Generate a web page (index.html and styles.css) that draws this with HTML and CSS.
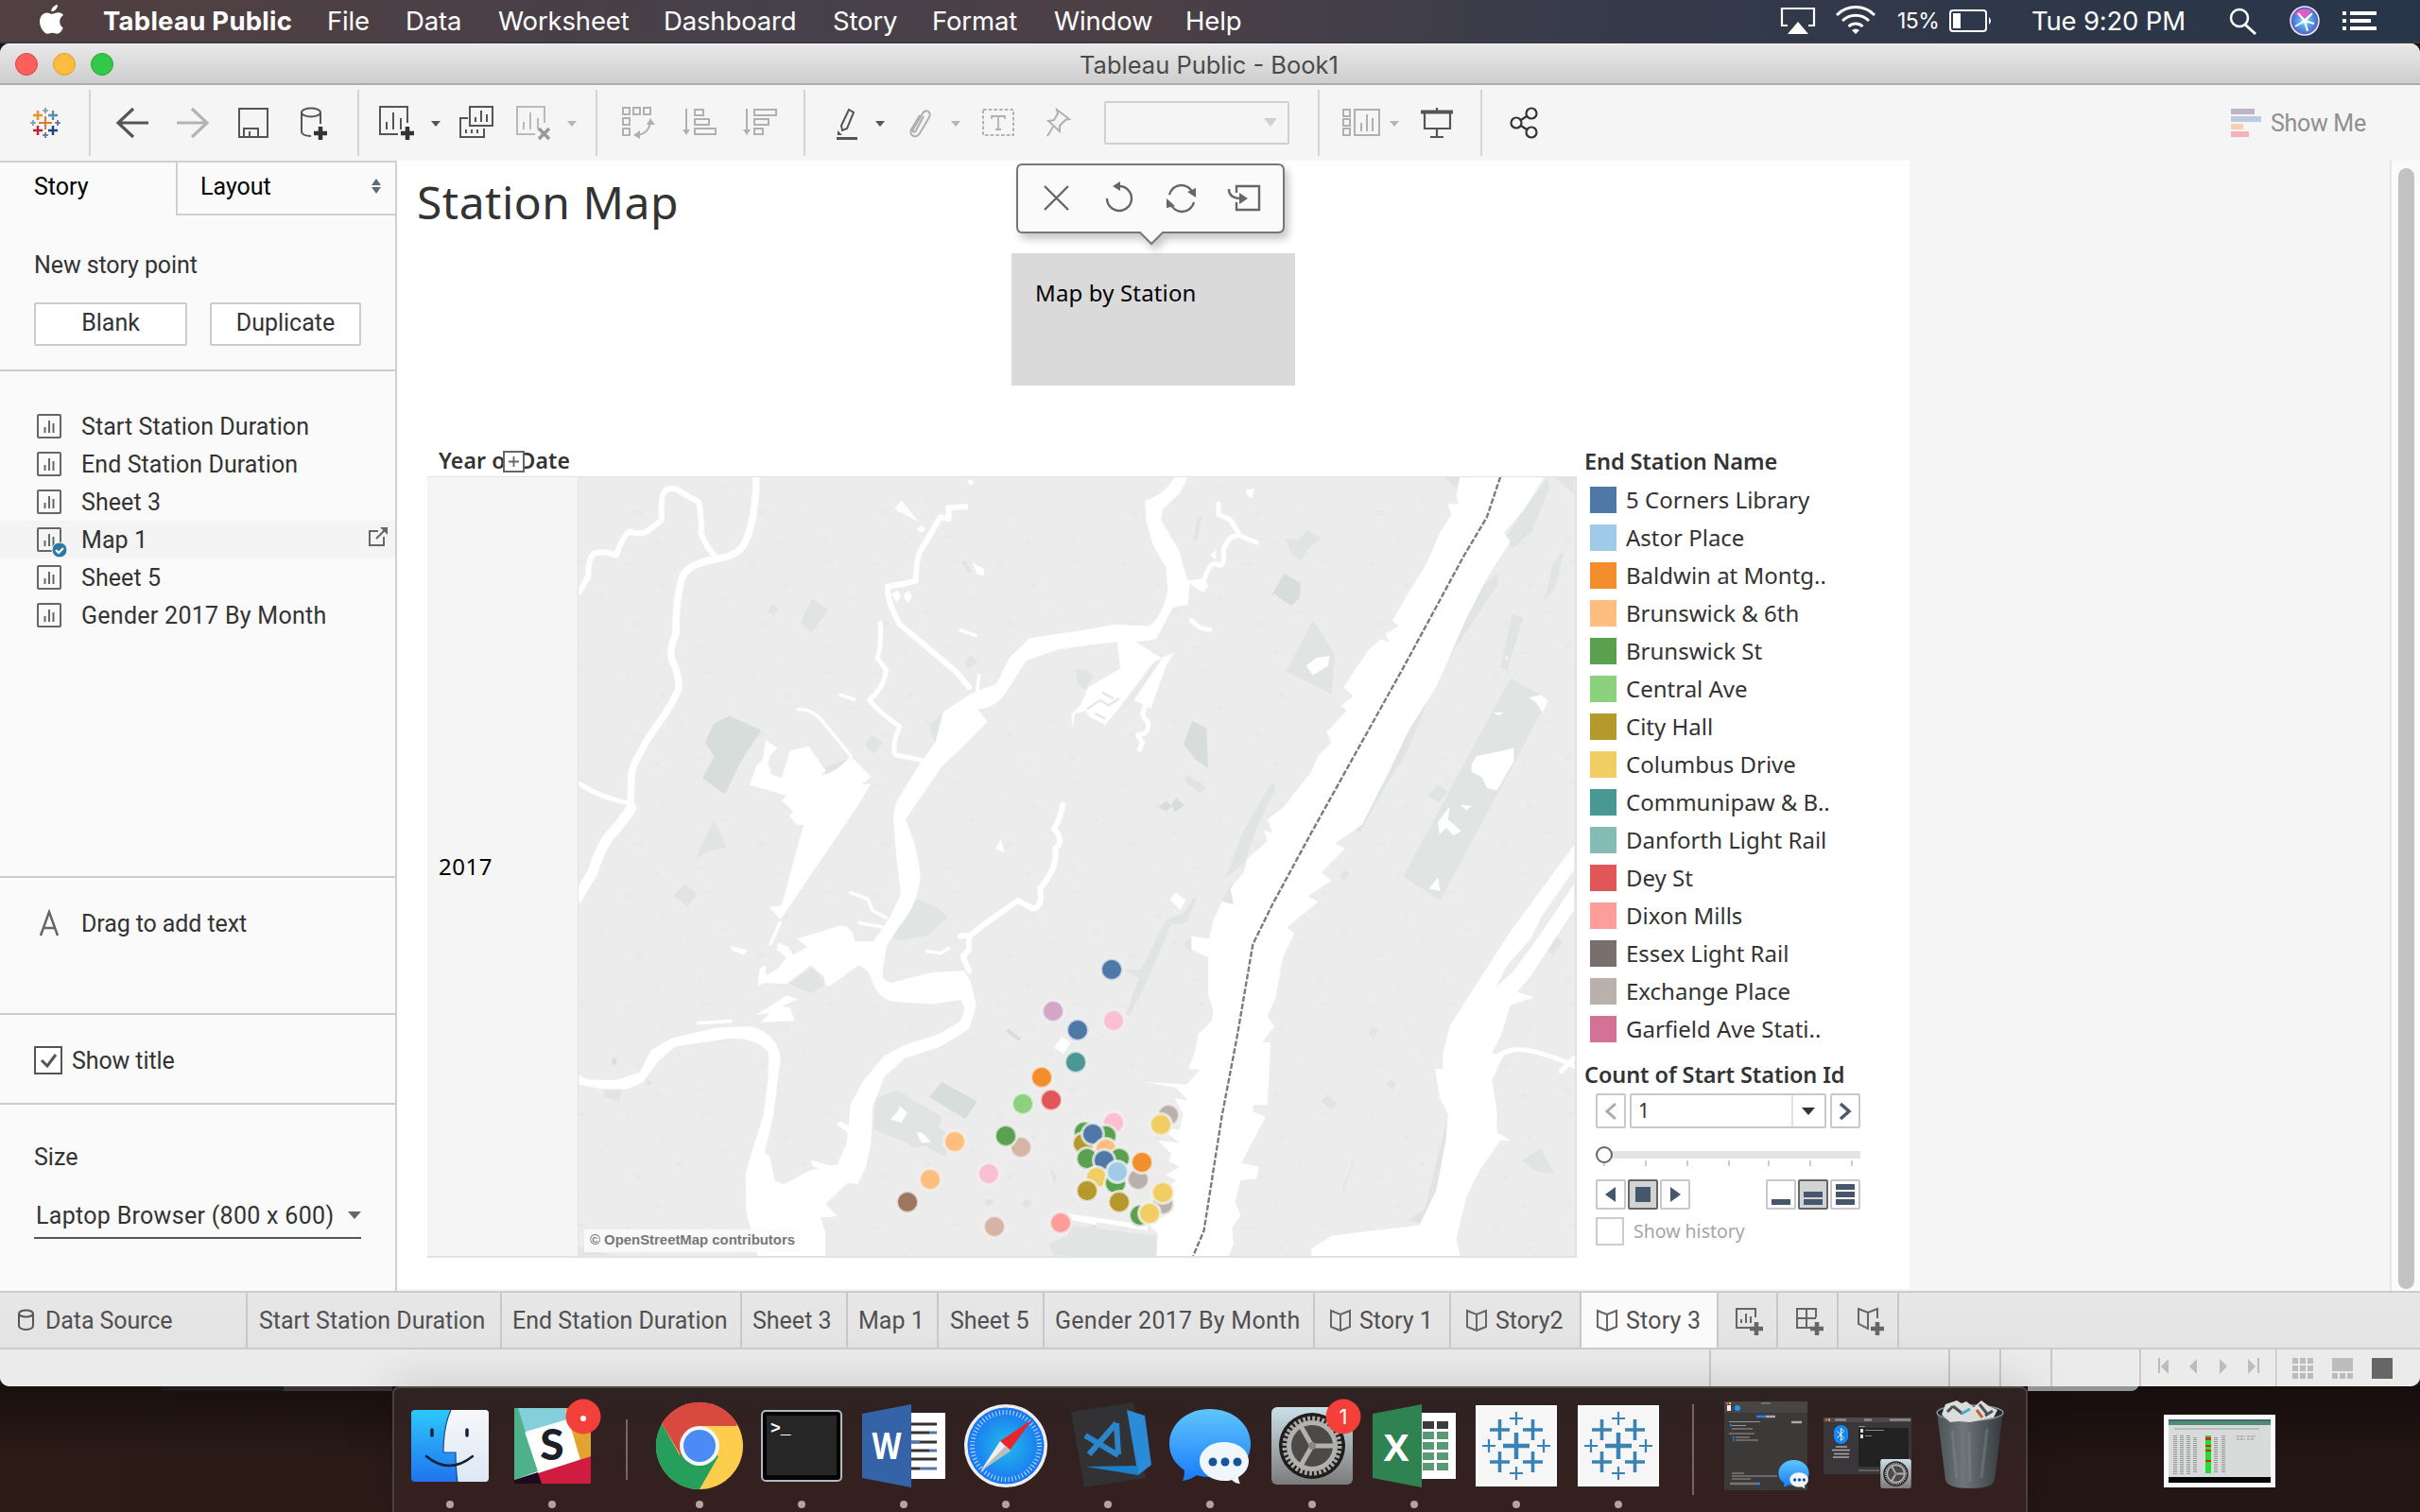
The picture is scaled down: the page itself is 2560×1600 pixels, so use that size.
FILE: index.html
```html
<!DOCTYPE html>
<html lang="en">
<head>
<meta charset="utf-8">
<title>Tableau Public - Book1</title>
<link rel="stylesheet" href="styles.css">
</head>
<body>
<svg class="defs" width="0" height="0">
  <defs>
    <symbol id="sheet" viewBox="0 0 26 26"><rect x="1" y="1" width="24" height="24" rx="1" fill="none" stroke="#666" stroke-width="2"/><path d="M8.500 14v6M13 7v13M17.500 10v10" stroke="#666" stroke-width="2"/></symbol>
    <symbol id="book" viewBox="0 0 24 24"><path d="M2 2l10 4 10-4v17l-10 4-10-4zM12 6v17" fill="none" stroke="#666" stroke-width="2"/></symbol>
    <symbol id="tabcross" viewBox="0 0 86 86"><rect width="86" height="86" fill="#f6f6f6"/><rect x="1" y="1" width="84" height="84" fill="none" stroke="#fff" stroke-width="2"/>
      <path d="M43 29v28M29 43h28" stroke="#3a82b4" stroke-width="4.500"/>
      <path d="M25.500 15v22M15 26h21M60.500 15v22M50 26h21M25.500 49v22M15 60h21M60.500 49v22M50 60h21" stroke="#3a82b4" stroke-width="3.600"/>
      <path d="M43 7v14M36 14h14M43 65v14M36 72h14M14 36v14M7 43h14M72 36v14M65 43h14" stroke="#3a82b4" stroke-width="2.200"/></symbol>
    <symbol id="bubble" viewBox="0 0 88 84"><path d="M44 2C20 2 1 18 1 39c0 12 6 21 16 28 0 5-1 9-2 11 7-1 12-4 15-6 4 1 9 2 14 2 24 0 43-14 43-35S68 2 44 2z" fill="url(#gmsg)"/><path d="M59 37c-15 0-26 9-26 20s11 21 26 21c3 0 6 0 8-1 3 3 6 4 9 4-1-2-2-4-2-7 7-4 11-10 11-17 0-11-11-20-26-20z" fill="#eff6fc"/><g fill="#15549b"><circle cx="47" cy="58" r="4.500"/><circle cx="60" cy="58" r="4.500"/><circle cx="73" cy="58" r="4.500"/></g></symbol>
    <symbol id="gear" viewBox="0 0 86 82"><rect width="86" height="82" rx="6" fill="url(#gpref)"/><circle cx="43" cy="41" r="35" fill="#1d1d1d"/><circle cx="43" cy="41" r="29" fill="none" stroke="#a9a7a4" stroke-width="5" stroke-dasharray="3 2.060"/><circle cx="43" cy="41" r="24.500" fill="#4b4a49" stroke="#b3b1ae" stroke-width="5"/><path d="M43 41h24M43 41L31 20M43 41L31 62" stroke="#b3b1ae" stroke-width="5"/><circle cx="43" cy="41" r="4" fill="#8a8886"/></symbol>
    <linearGradient id="gmsg" x2="0" y2="1"><stop stop-color="#5fc6fb"/><stop offset="1" stop-color="#1a7bfb"/></linearGradient>
    <linearGradient id="gpref" x2="0" y2="1"><stop stop-color="#cbdfe8"/><stop offset="1" stop-color="#7d7b7b"/></linearGradient>
    <linearGradient id="gfind" x2="0" y2="1"><stop stop-color="#2cc8fb"/><stop offset="1" stop-color="#2173ee"/></linearGradient>
    <linearGradient id="gface" x2="0" y2="1"><stop stop-color="#f7f7f9"/><stop offset="1" stop-color="#dbe8f4"/></linearGradient>
    <radialGradient id="gsaf"><stop stop-color="#20bdea"/><stop offset="1" stop-color="#1b74f2"/></radialGradient>
    <linearGradient id="gtrash"><stop stop-color="#4c5357"/><stop offset=".4" stop-color="#6d767b"/><stop offset="1" stop-color="#34393c"/></linearGradient>
    <radialGradient id="gsiri"><stop stop-color="#fff"/><stop offset=".35" stop-color="#4fb7ec"/><stop offset="1" stop-color="#5757c8"/></radialGradient>
    <pattern id="speck" width="131" height="117" patternUnits="userSpaceOnUse"><g fill="#e8e9e9"><ellipse cx="10" cy="12" rx="4" ry="2"/><ellipse cx="46" cy="34" rx="3" ry="3"/><ellipse cx="92" cy="9" rx="5" ry="2"/><ellipse cx="112" cy="48" rx="3" ry="2"/><ellipse cx="20" cy="75" rx="5" ry="3"/><ellipse cx="64" cy="62" rx="3" ry="2"/><ellipse cx="86" cy="100" rx="4" ry="2"/><ellipse cx="40" cy="106" rx="3" ry="2"/></g></pattern>
  </defs>
</svg>

<header class="menubar">
  <svg class="apple" width="109" height="45" viewBox="0 0 109 45"><path fill="#fff" d="M61 5c.3 3-2.600 7.200-6.700 7.300C54 8.600 57.600 5.300 61 5zM66.800 29.500c-1.600 3.500-3.900 6.200-6.400 6.200-1.900 0-2.700-1-5-1s-3.300 1-5 1C46.500 35.700 42 28.800 42 23c0-6 3.700-9.600 7.700-9.600 2.300 0 4.100 1.400 5.600 1.400 1.400 0 3.700-1.500 6.500-1.500 2.200 0 4 1.100 5.200 2.700-5.400 3.300-4.600 11-.2 13.500z"/></svg>
  <nav class="menus"><b class="m1">Tableau Public</b><span class="m2">File</span><span class="m3">Data</span><span class="m4">Worksheet</span><span class="m5">Dashboard</span><span class="m6">Story</span><span class="m7">Format</span><span class="m8">Window</span><span>Help</span></nav>
  <div class="tray">
    <svg width="130" height="45" viewBox="1877 0 130 45"><path d="M1891 27h-6V9h34v18h-6" fill="none" stroke="#fff" stroke-width="2.200"/><path d="M1902 23l11 13h-22z" fill="#fff"/><g fill="none" stroke="#fff" stroke-width="3"><path d="M1943 16a28 28 0 0 1 40 0M1949 22a20 20 0 0 1 28 0M1955.500 28a11 11 0 0 1 15 0"/></g><path d="M1963 36l-4-4a6 6 0 0 1 8 0z" fill="#fff"/></svg>
    <span class="pct">15%</span>
    <svg width="97" height="45" viewBox="2052 0 97 45"><rect x="2063" y="11" width="38" height="22" rx="3" fill="none" stroke="#fff" stroke-width="2"/><rect x="2066" y="14" width="8" height="16" fill="#fff"/><path d="M2104 18q4 4 0 8z" fill="#fff"/></svg>
    <span class="clock">Tue 9:20 PM</span>
    <svg width="219" height="45" viewBox="2341 0 219 45"><circle cx="2369" cy="19" r="9" fill="none" stroke="#fff" stroke-width="2.500"/><path d="M2375 26l11 10" stroke="#fff" stroke-width="3"/><circle cx="2438" cy="22" r="15" fill="url(#gsiri)" stroke="#eee" stroke-width="1.500"/><path d="M2427 15q6-8 18-4l-7 9z" fill="#e65ac2"/><path d="M2438 22l10 3M2438 22l-10 6M2438 22l3 11M2438 22l-7-8M2438 22l8-8" stroke="#fff" stroke-width="2"/><path d="M2478 14h4M2486 14h28M2478 22h4M2486 22h22M2478 30h4M2486 30h28" stroke="#fff" stroke-width="4"/></svg>
  </div>
</header>

<main class="window">
  <div class="titlebar"><i class="light red"></i><i class="light amber"></i><i class="light green"></i><span class="wtitle">Tableau Public - Book1</span></div>

  <div class="toolbar">
    <svg width="94" height="80" viewBox="0 90 94 80"><path d="M48 123v14M41 130h14" stroke="#e8762d" stroke-width="2"/><path d="M40 117v10M35 122h10" stroke="#eb912c" stroke-width="2.400"/><path d="M56 117v10M51 122h10" stroke="#5a8ea5" stroke-width="2.400"/><path d="M40 133v10M35 138h10" stroke="#c72035" stroke-width="2.400"/><path d="M56 133v10M51 138h10" stroke="#1f457e" stroke-width="2.400"/><path d="M48 114v6M45 117h6M35 127v6M32 130h6" stroke="#7199a6" stroke-width="1.600"/><path d="M61 127v6M58 130h6M48 140v6M45 143h6" stroke="#5b6591" stroke-width="1.600"/></svg>
    <i class="sep"></i>
    <svg width="282" height="80" viewBox="96 90 282 80" fill="none" stroke="#555" stroke-width="2"><path d="M157 130h-32M141 115l-16 15 16 15" stroke-width="3.200"/><path d="M187 130h32M203 115l16 15-16 15" stroke="#b4b4b4" stroke-width="3.200"/><path d="M253 115h30v30h-30zM258 145v-9h15v9M264 144v-5"/><path d="M319 119v20c0 3 4 5 10 5M339 119v12"/><ellipse cx="329" cy="119" rx="10" ry="4.500"/><path d="M339 134v14M332 141h14" stroke="#333" stroke-width="4.500"/></svg>
    <i class="sep"></i>
    <svg width="250" height="80" viewBox="380 90 250 80" fill="none" stroke="#555" stroke-width="2"><path d="M431 130v-17h-29v29h19M409 137v-8M416 137v-18M424 137v-12"/><path d="M431 134v14M424 141h14" stroke="#333" stroke-width="4.500"/><path d="M456 128h10l-5 6z" fill="#555" stroke="none"/><path d="M497 113h24v20h-24zM503 129v-5M509 129v-12M515 129v-8M495 125h-8v20h25v-9M493 141v-4M499 141v-4M505 141v-4"/><g stroke="#b9b9b9"><path d="M576 130v-17h-29v29h19M554 137v-8M561 137v-18M569 137v-12"/><path d="M570 136l11 11M581 136l-11 11" stroke="#999" stroke-width="3.500"/></g><path d="M600 128h10l-5 6z" fill="#b4b4b4"  stroke="none"/></svg>
    <i class="sep"></i>
    <svg width="218" height="80" viewBox="632 90 218 80" fill="none" stroke="#b0b0b0" stroke-width="2"><path d="M659 114h7v7h-7zM670 114h7v7h-7zM681 114h7v7h-7zM659 125h7v7h-7zM659 136h7v7h-7zM674 143c9-1 13-6 14-14"/><path d="M688 125l5 7h-9zM670 143l7-5v9z" fill="#b0b0b0" stroke="none"/><path d="M726 115v24M735 116h9v6h-9zM735 126h15v6h-15zM735 136h22v6h-22z"/><path d="M722 137h8l-4 6zM786 137h8l-4 6z" fill="#b0b0b0" stroke="none"/><path d="M790 115v24M798 116h23v6h-23zM798 126h15v6h-15zM798 136h9v6h-9z"/></svg>
    <i class="sep"></i>
    <svg width="316" height="80" viewBox="852 90 316 80" fill="none" stroke="#b0b0b0" stroke-width="2"><path d="M898 116l5 3-7 17-5 2-1-5z" stroke="#555"/><path d="M885 146.500h22" stroke="#555" stroke-width="3"/><path d="M886 138l5 5h-5z" fill="#555" stroke="none"/><path d="M926 128h10l-5 6z" fill="#555" stroke="none"/><path d="M977 123l-8 15c-1 3-4 2-3-1l10-17c3-5 10-2 7 4l-10 17c-4 6-12 3-9-4l9-15" /><path d="M1006 128h10l-5 6z" fill="#b4b4b4" stroke="none"/><rect x="1040" y="116" width="32" height="27" stroke-dasharray="3.500 2.200"/><path d="M1049 126v-3h14v3M1056 123v14M1053 137h6" stroke-width="1.800"/><path d="M1118 116l13 10-4 1-6 6v6l-12-11 6-1 4-7zM1114 134l-6 10"/></svg>
    <div class="combo"><svg width="16" height="12" viewBox="0 0 16 12"><path d="M1 1h14L8 10z" fill="#cfcfcf"/></svg></div>
    <i class="sep"></i>
    <svg width="170" height="80" viewBox="1396 90 170 80" fill="none" stroke="#b0b0b0" stroke-width="2"><path d="M1421 116h7v7h-7zM1421 126h7v7h-7zM1421 136h7v7h-7zM1433 116h26v27h-26zM1440 139v-9M1446 139v-18M1452 139v-14"/><path d="M1470 128h10l-5 6z" fill="#b4b4b4" stroke="none"/><path d="M1503 118.500h34" stroke="#555" stroke-width="4"/><path d="M1507 119v17h27v-17M1520 114v4M1520 136v9M1513 145h14" stroke="#555" stroke-width="2.200"/></svg>
    <i class="sep"></i>
    <svg width="90" height="80" viewBox="1568 90 90 80" fill="none" stroke="#333" stroke-width="2.200"><circle cx="1604" cy="130" r="5.500"/><circle cx="1620" cy="120" r="5.500"/><circle cx="1620" cy="140" r="5.500"/><path d="M1609 127l6-4M1609 133l6 4"/></svg>
    <div class="showme"><svg width="42" height="32" viewBox="0 0 42 32"><path d="M0 1h25v6H0z" fill="#bfb3c8"/><path d="M0 9h32v6H0z" fill="#b9cde0"/><path d="M0 17h13v6H0z" fill="#f5ceb3"/><path d="M0 25h19v6H0z" fill="#f7b3b9"/></svg><span>Show Me</span></div>
  </div>

  <div class="work">
    <aside class="side">
      <div class="sidetabs"><span class="tab-on">Story</span><span class="tab-off">Layout<svg width="12" height="16" viewBox="0 0 12 16"><path d="M6 0l5 7H1zM6 16l5-7H1z" fill="#5f6b7b"/></svg></span></div>
      <section class="newpoint"><p>New story point</p><div class="btns"><span class="btn blank">Blank</span><span class="btn dup">Duplicate</span></div></section>
      <section class="sheets">
        <div class="row"><svg class="si"><use href="#sheet"/></svg>Start Station Duration</div>
        <div class="row"><svg class="si"><use href="#sheet"/></svg>End Station Duration</div>
        <div class="row"><svg class="si"><use href="#sheet"/></svg>Sheet 3</div>
        <div class="row on"><svg class="si"><use href="#sheet"/></svg>Map 1<svg class="tick" width="18" height="18" viewBox="0 0 18 18"><circle cx="9" cy="9" r="8" fill="#2b7aa5" stroke="#f5f5f5"/><path d="M5 9l3 3 5-5" fill="none" stroke="#fff" stroke-width="2"/></svg><svg class="pop" width="22" height="22" viewBox="0 0 22 22"><path d="M11 5H2v15h15v-9M9 13L19 3" fill="none" stroke="#666" stroke-width="2"/><path d="M13 1h8v8z" fill="#666"/></svg></div>
        <div class="row"><svg class="si"><use href="#sheet"/></svg>Sheet 5</div>
        <div class="row wide"><svg class="si"><use href="#sheet"/></svg>Gender 2017 By Month</div>
      </section>
      <section class="drag"><svg width="49" height="30" viewBox="37 963 49 30"><path d="M43 991l9-25 9 25M46 983h12" fill="none" stroke="#666" stroke-width="2.500"/></svg>Drag to add text</section>
      <section class="show"><svg width="40" height="30" viewBox="0 0 40 30"><rect x="1" y="1" width="28" height="28" fill="#fff" stroke="#555" stroke-width="2"/><path d="M8 15l6 6 9-12" fill="none" stroke="#555" stroke-width="3"/></svg>Show title</section>
      <section class="size"><p>Size</p><div class="pick"><span>Laptop Browser (800 x 600)</span><svg width="14" height="8" viewBox="0 0 14 8"><path d="M0 0h14L7 8z" fill="#666"/></svg></div></section>
    </aside>

    <div class="page">
      <h1>Station Map</h1>
      <div class="storypoint"><span>Map by Station</span>
        <svg class="callout" width="306" height="106" viewBox="1065 163 306 106"><path d="M1081 174h271q6 0 6 6v60q0 6-6 6h-122l-12 12-12-12h-125q-5 0-5-6v-60q0-6 5-6z" fill="#fafafa" stroke="#777" stroke-width="2"/><g fill="none" stroke="#666" stroke-width="2.400"><path d="M1105 197l25 25M1130 197l-25 25"/><path d="M1184 197a13 13 0 1 1-13 13"/><path d="M1237 206a13 13 0 0 1 25-1M1263 214a13 13 0 0 1-25 1"/><path d="M1308 204v-7h24v25h-24v-8M1300 200c0 7 5 10 13 10"/></g><path d="M1177 197l8-5v10zM1256 203l9-4v10zM1234 210l9 8-9 2zM1311 204l9 6-9 6z" fill="#666"/></svg>
      </div>
      <div class="viz">
        <div class="vizmain">
          <div class="field">Year of Date<svg class="plus" width="23" height="23" viewBox="0 0 23 23"><rect x="1" y="1" width="21" height="21" fill="#fff" stroke="#666" stroke-width="2"/><path d="M6 11.500h11M11.500 6v11" stroke="#666" stroke-width="1.800"/></svg></div>
          <div class="pane">
            <div class="year">2017</div>
            <div class="mapbox">
            <svg width="1054" height="824" viewBox="612 505 1054 824">
              <rect x="612" y="505" width="1054" height="824" fill="#ececec"/><rect x="612" y="505" width="1054" height="824" fill="url(#speck)"/>
              <g class="geo" transform="translate(600 480) scale(.357143 .561224)">
                <g fill="#e0e5e3"><path d="M725 273l50 22-52 43-32-18zM610 284l15 8-12 14-20-8zM435 690l38 52-60 10-32 12zM348 812l36 18-26 25-43-22zM903 530l32 16-28 20-25-16zM1110 490l-40 22 20 35zM1535 405l25 16-30 25-22-20zM1195 380l22 13-28 12-14-10zM1180 202l18 20-10 3-22-20zM110 1200h52l-8 22-48-10zM235 1180l22 5-20 8z"/><path d="M1035 840l60 15 32 20-60 33-80 10-30-8 30-30zM725 968l40 32-42 18-68-18zM765 590l85-18-5 20-80 16zM915 1215l60-15 135 50-10 20 35 15-15 42-60-22-40 4-15-10-98-25zM1250 1405l15 5-18 10-14-8zM1362 1405l15 8-18 10-15-8zM1430 1345l22 18-10 15zM1425 1490l143-40v62h-125zM35 1495l100 17H35z"/></g>
                <g fill="#d6dddb"><path d="M480 494l95 28-60 58-48 63-67-32 36-40-28-26 26-35zM1110 1185l104 36-34 34-108-42zM1308 1084l38 20-10 3-38-18zM133 1140h12v12h-12z"/></g>
                <g class="river"><path class="w5" d="M35 262L62 232Q62 192 85 187Q115 183 145 192Q165 155 185 147Q215 155 240 145L280 125Q275 80 290 70Q310 62 325 68L390 92Q400 125 396 150Q415 180 440 195"/>
                <path class="w6" d="M560 40C560 100 545 150 520 175C490 200 430 197 400 205Q350 215 340 235Q322 270 322 340C315 350 305 365 308 385Q335 420 330 445C290 500 240 530 220 560Q190 590 190 610L188 665"/>
                <path class="w9" d="M190 668Q170 690 120 725Q95 750 75 790L30 838"/>
                <path class="w4" d="M35 622Q100 650 190 660M928 320Q930 370 918 385L945 408Q940 440 895 465Q920 485 985 515Q960 550 972 568L1050 578"/>
                <path class="w5" d="M1190 440L1150 410L985 322Q945 275 950 250Q990 248 1032 240Q1035 190 1050 180L1105 120L1130 123L1130 102L1180 100"/>
                <path class="w5" d="M1468 662Q1460 690 1442 708Q1475 730 1445 745Q1455 780 1400 820Q1410 855 1380 858L1335 843L1230 890L1195 908L1165 910M1190 910L1190 935L1172 948L1190 975"/>
                <path class="w3" d="M683 482Q720 480 750 500L840 570M840 828L890 840L905 862L945 875M865 885L930 892M630 885L602 925M387 1074L485 1070M1065 938L1105 942L1130 933M1165 333L1210 343M808 455L850 463M1220 418L1215 445"/></g>
                <g fill="#fff"><path d="M660 560L715 552L765 598L750 608Q800 600 840 570L900 610L870 625L900 622L860 665L632 878L598 855L635 852L700 700L680 700L658 683L670 675L635 655L650 645L600 635L540 625L560 590L580 575L588 540L622 555L600 570L595 585L605 605L635 612Z"/>
                <path d="M680 915L810 890Q845 890 852 920L915 920L890 972L862 965L780 1003L765 1003L760 985L720 965L650 1000L585 998L565 1003L570 970L588 965L588 985L625 970L650 950L620 935L625 922L655 930L670 945L710 930Z"/>
                <path d="M560 1058L650 1022L683 1028L635 1042L660 1045L675 1070L572 1072L600 1055ZM483 928L535 937L520 945L490 937ZM970 105L990 88L1005 100L1040 128L1000 115ZM1035 142L1050 135L1062 143L1048 150ZM1200 205L1235 218L1235 230L1215 228ZM1268 745L1285 728L1295 752ZM1185 54L1195 48L1205 54L1195 60ZM960 265L978 258L990 268L975 280ZM995 268L1010 258L1022 268L1008 282ZM1442 1120L1465 1100L1492 1110L1470 1132ZM957 1255L980 1240L985 1230L1007 1243L990 1262ZM1035 1280L1050 1280L1078 1298L1050 1300ZM722 1332L790 1345L780 1358L725 1342ZM798 1265L808 1258L840 1270L835 1282ZM1485 1435L1568 1442V1455L1495 1445ZM1568 445L1535 455L1520 475L1495 490L1495 518L1505 490L1568 480Z"/>
                <path d="M1568 330L1450 340L1370 348L1310 385L1270 435L1215 447L1190 455L1115 487L1090 545L1050 580L990 640Q960 670 967 700L975 760L988 830L960 870L905 922L850 925L870 965L895 980Q915 1025 960 1033L1080 1038L1165 1030L1178 1045L1165 1070L1100 1095L1000 1115L940 1135L880 1180L840 1225L828 1300L800 1340L720 1352L640 1378L615 1370L600 1325L585 1318L610 1250L632 1140Q620 1090 540 1080L440 1083L310 1102L248 1125L215 1167L140 1182L60 1180L35 1172V1190L100 1198L180 1198L225 1185L270 1145L320 1118L480 1103Q560 1100 597 1130L595 1180L580 1250L545 1320L528 1360L530 1430L565 1513H765V1470L750 1440L800 1438L765 1415L830 1375L860 1378L885 1345L900 1300L905 1230L940 1175L1000 1140L1100 1120L1190 1085L1212 1040L1195 995L1175 975L1080 978L960 998Q930 995 935 975L945 930L985 890Q1040 850 1046 795Q1040 745 1002 690L1040 655L1110 590L1160 560L1225 518L1245 505L1215 482Q1270 480 1300 450L1360 390L1450 370L1568 358Z"/></g>
              </g>
              <g class="geo" transform="translate(1130 480) scale(.357143 .561224)">
                <g fill="#e0e5e3"><path d="M725 314l65 65-10 75-135-43zM643 160l40 3 25-20 40 17-40 22-20 20-30-15zM397 115l-15 50-12 0 12-40zM1310 423l112 40-320 380-110-45zM1270 225l5 20L1100 410l-95 150-90 95-50 60-20-10L1000 520l100-110 120-155zM1115 44h80l-50 20zM1350 105l70-60 5 20-50 80-60 35-20-20zM1440 44h58v32zM1470 180l-25 70-35 28 25-70zM1348 310l-48 98-20-5 35-100zM25 405l50 12-25 28-25-15zM350 605l60 25-20 10-45-22zM1095 625l28 12-25 22-33-15zM605 618l10 12-60 80-30 60-60 30 55-90zM455 840l30-30 20 22-22 20z"/><path d="M380 840l-30 45-45 3-60 90-60 80-15 0 40-70-45-15 50 0 75-95 50-10 30-30zM770 1210l28 16-20 10-30-16zM955 1180l18 9-15 10-15-10zM900 1080l18 8-14 16-14-10zM1400 1310l42 50-60-8-38-20zM1120 1260l-5 100-60 95-50-10 50-20 40-100zM862 1310l-50 85 3-15zM0 1455l262 20v38H0zM370 910l-30 15 25 15zM1445 910l20 10-28 25-20-8zM820 785l14 8-20 12-10-10z"/></g>
                <g fill="#d6dddb"><path d="M640 226l48 18-2 28-26 15-50-22-10 5zM368 504l42 14 4 75-35-15-38-30zM290 655l18 10-18 10-24-8zM320 648l25 15-30 13-8-15z"/></g>
                <g fill="#fff"><path d="M315 44Q290 75 228 90L232 130L250 170L290 215L295 260Q270 320 235 325L140 322L0 338V365L145 355L155 405L60 440L40 470L60 495L110 512L150 480L250 395L280 385L195 465L245 480L290 400L315 375L275 385L200 355L260 350L310 290L355 285L360 245L400 262L415 250L405 235L355 240L342 215L330 185L275 125L280 105L330 75L355 44Z"/>
                <path d="M1160 44L1150 80L1155 95L1125 95L1135 115L1100 150L1060 210L1010 260L960 315L980 325L940 340L950 355L925 350L890 370L815 440L845 458L808 475L825 485L765 525L780 545L740 570L720 600L640 665L590 690L605 715L580 710L590 730L530 765L520 790L480 820L490 850L455 845L430 880L418 915L365 910L365 935L415 950L415 1020L430 1050L425 1070L385 1095L375 1130L355 1160L390 1162L350 1190L225 1185L320 1195L355 1220L315 1215L340 1245L330 1275L270 1270L330 1300L265 1295L305 1320L298 1335L330 1345L290 1360L320 1370L275 1395L285 1440L225 1445L265 1470L262 1513H475L490 1490L485 1460L510 1436L495 1410L510 1370L558 1367L565 1345L512 1338L585 1250L545 1240L550 1228L590 1228L600 1110L575 1110L610 1080L590 1060L615 1025L635 950L670 905L648 893L740 845L710 835L780 805L750 790L820 745L790 735L870 700L950 600L1010 520L1090 440L1180 310L1240 235L1310 165L1290 150L1350 105L1410 44Z"/>
                <path d="M1498 738L1300 910L1130 1080L1110 1130V1160L1087 1160L1100 1215L1125 1245L1120 1290L1090 1390L1040 1455L900 1465L780 1475L720 1500V1513H1160L1150 1480L1180 1400L1220 1350L1280 1295L1310 1295L1270 1280L1270 1240L1255 1180L1290 1135L1255 1130L1280 1100L1310 1040L1380 1025L1330 1015L1370 985L1498 860Z"/>
                <path d="M1195 585L1210 570L1290 560L1320 555V580L1270 635L1240 630L1225 610L1195 600ZM1365 460L1400 455L1422 465L1405 488L1385 468ZM1095 695L1130 665L1125 690L1165 712L1140 720L1120 705L1100 718ZM1068 820L1095 800L1102 825ZM1260 488L1290 488L1275 494ZM1160 662L1195 664L1180 672ZM705 400L735 385L775 382L770 400L725 418ZM528 68L550 66L545 84L528 78ZM302 842L318 828L348 842L332 860ZM420 190L440 182L435 200ZM1295 380L1303 385L1298 390ZM0 1433L235 1455V1465L20 1442Z"/></g>
                <path d="M1265 1008L1300 965L1370 915L1400 875L1498 785V812L1400 905L1320 975Z" fill="#ececec"/>
                <path d="M55 482L95 465L120 475L150 462M80 490L110 500M100 450L135 462M170 478L265 392" fill="none" stroke="#e6e8e8" stroke-width="5"/>
                <g class="river"><path class="w4" d="M405 235Q420 200 445 210Q465 215 460 180Q480 150 510 155L480 125L445 115V95M510 155L558 168"/><path class="w4" d="M365 315L390 328L420 332M230 475Q210 495 235 505Q245 530 205 530L220 545L212 558"/><path class="w4" d="M1255 1145Q1300 1118 1360 1125Q1440 1135 1498 1155M1498 1140L1460 1165"/></g>
                <path class="border" d="M1280 44L1240 120L1170 195L1000 395L720 715L605 850L547 925L500 1100L455 1250L402 1465L370 1513"/>
              </g>
              <g class="dots">
                <circle cx="1176" cy="1026" r="11.500" fill="#4e79a7"/><circle cx="1178" cy="1080" r="11.500" fill="#fabfd2"/><circle cx="1114" cy="1070" r="11.500" fill="#d4a6c8"/><circle cx="1140" cy="1090" r="11.500" fill="#4e79a7"/><circle cx="1138" cy="1124" r="11.500" fill="#499894"/><circle cx="1102" cy="1140" r="11.500" fill="#f28e2b"/><circle cx="1112" cy="1164" r="11.500" fill="#e15759"/><circle cx="1082" cy="1168" r="11.500" fill="#8cd17d"/><circle cx="1080" cy="1214" r="11.500" fill="#d7b5a6"/><circle cx="1064" cy="1202" r="11.500" fill="#59a14f"/><circle cx="1046" cy="1242" r="11.500" fill="#fabfd2"/><circle cx="1010" cy="1208" r="11.500" fill="#ffbe7d"/><circle cx="984" cy="1248" r="11.500" fill="#ffbe7d"/><circle cx="960" cy="1272" r="11.500" fill="#9d7660"/><circle cx="1052" cy="1298" r="11.500" fill="#d7b5a6"/><circle cx="1122" cy="1294" r="11.500" fill="#ff9d9a"/>
                <circle cx="1178" cy="1188" r="11.500" fill="#fabfd2"/><circle cx="1147" cy="1198" r="11.500" fill="#59a14f"/><circle cx="1170" cy="1202" r="11.500" fill="#59a14f"/><circle cx="1146" cy="1210" r="11.500" fill="#b6992d"/><circle cx="1156" cy="1200" r="11.500" fill="#4e79a7"/><circle cx="1170" cy="1216" r="11.500" fill="#ffbe7d"/><circle cx="1150" cy="1226" r="11.500" fill="#59a14f"/><circle cx="1184" cy="1226" r="11.500" fill="#59a14f"/><circle cx="1168" cy="1228" r="11.500" fill="#4e79a7"/><circle cx="1160" cy="1246" r="11.500" fill="#f1ce63"/><circle cx="1180" cy="1252" r="11.500" fill="#59a14f"/><circle cx="1182" cy="1240" r="11.500" fill="#a0cbe8"/><circle cx="1150" cy="1260" r="11.500" fill="#b6992d"/><circle cx="1184" cy="1272" r="11.500" fill="#b6992d"/><circle cx="1204" cy="1248" r="11.500" fill="#bab0ac"/><circle cx="1208" cy="1230" r="11.500" fill="#f28e2b"/><circle cx="1236" cy="1180" r="11.500" fill="#bab0ac"/><circle cx="1228" cy="1190" r="11.500" fill="#f1ce63"/><circle cx="1230" cy="1274" r="11.500" fill="#bab0ac"/><circle cx="1230" cy="1262" r="11.500" fill="#f1ce63"/><circle cx="1206" cy="1286" r="11.500" fill="#59a14f"/><circle cx="1216" cy="1284" r="11.500" fill="#f1ce63"/>
              </g>
            </svg>
            <span class="osm">© OpenStreetMap contributors</span>
            </div>
          </div>
        </div>
        <div class="legend">
          <h2>End Station Name</h2>
          <ul>
            <li><i class="c1"></i>5 Corners Library</li><li><i class="c2"></i>Astor Place</li><li><i class="c3"></i>Baldwin at Montg..</li><li><i class="c4"></i>Brunswick &amp; 6th</li><li><i class="c5"></i>Brunswick St</li><li><i class="c6"></i>Central Ave</li><li><i class="c7"></i>City Hall</li><li><i class="c8"></i>Columbus Drive</li><li><i class="c9"></i>Communipaw &amp; B..</li><li><i class="c10"></i>Danforth Light Rail</li><li><i class="c11"></i>Dey St</li><li><i class="c12"></i>Dixon Mills</li><li><i class="c13"></i>Essex Light Rail</li><li><i class="c14"></i>Exchange Place</li><li><i class="c15"></i>Garfield Ave Stati..</li>
          </ul>
          <h2 class="count">Count of Start Station Id</h2>
          <div class="pager"><span class="box"><svg width="14" height="20" viewBox="0 0 14 20"><path d="M12 2L3 10l9 8" fill="none" stroke="#aaa" stroke-width="3"/></svg></span><span class="value"><em>1</em><svg width="14" height="8" viewBox="0 0 14 8"><path d="M0 0h14L7 8z" fill="#333"/></svg></span><span class="box"><svg width="14" height="20" viewBox="0 0 14 20"><path d="M2 2l9 8-9 8" fill="none" stroke="#4a5a72" stroke-width="3.500"/></svg></span></div>
          <svg class="slider" width="284" height="22" viewBox="1686 1212 284 22"><path d="M1700 1222h268" stroke="#e4e4e4" stroke-width="8"/><path d="M1697 1228v6M1741 1228v6M1785 1228v6M1829 1228v6M1871 1228v6M1915 1228v6M1959 1228v6" stroke="#ccc" stroke-width="2"/><circle cx="1697" cy="1222" r="8" fill="#fff" stroke="#666" stroke-width="2"/></svg>
          <div class="play"><span class="box"><svg width="12" height="16" viewBox="0 0 12 16"><path d="M11 0v16L0 8z" fill="#46566d"/></svg></span><span class="box sel"><svg width="16" height="16"><rect width="16" height="16" fill="#46566d"/></svg></span><span class="box"><svg width="12" height="16" viewBox="0 0 12 16"><path d="M1 0v16l11-8z" fill="#46566d"/></svg></span><span class="box speed"><svg width="20" height="24" viewBox="0 0 20 24"><path d="M0 20h20" stroke="#46566d" stroke-width="6"/></svg></span><span class="box sel"><svg width="20" height="24" viewBox="0 0 20 24"><path d="M0 12h20M0 20h20" stroke="#46566d" stroke-width="6"/></svg></span><span class="box"><svg width="20" height="24" viewBox="0 0 20 24"><path d="M0 4h20M0 12h20M0 20h20" stroke="#46566d" stroke-width="6"/></svg></span></div>
          <div class="history"><i></i>Show history</div>
        </div>
      </div>
    </div>
    <div class="gutter"></div>
    <div class="scroll"><i></i></div>
  </div>

  <div class="tabs">
    <span class="t t0"><svg width="48" height="58" viewBox="0 1367 48 58"><path d="M20 1389v13c0 2 3 4 7.500 4s7.500-2 7.500-4v-13" fill="none" stroke="#555" stroke-width="2"/><ellipse cx="27.500" cy="1389" rx="7.500" ry="3.500" fill="none" stroke="#555" stroke-width="2"/></svg>Data Source</span><span class="t t1">Start Station Duration</span><span class="t t2">End Station Duration</span><span class="t t3">Sheet 3</span><span class="t t4">Map 1</span><span class="t t5">Sheet 5</span><span class="t t6 wide">Gender 2017 By Month</span><span class="t t7"><svg class="bk"><use href="#book"/></svg>Story 1</span><span class="t t8"><svg class="bk"><use href="#book"/></svg>Story2</span><span class="t t9"><svg class="bk"><use href="#book"/></svg>Story 3</span>
    <svg class="new" width="193" height="58" viewBox="1818 1368 193 58" fill="none" stroke="#666" stroke-width="2"><path d="M1857 1394v-9h-20v20h15M1842 1400v-4M1847 1400v-10M1852 1400v-7"/><path d="M1921 1394v-9h-20v20h15M1911 1385v20M1901 1395h20"/><path d="M1986 1395v-10l-10 4-10-4v16l10 5v-17"/><path d="M1858 1399v14M1851 1406h14M1922 1399v14M1915 1406h14M1986 1399v14M1979 1406h14" stroke-width="4.500"/><path d="M1880 1367v60M1944 1367v60M2008 1367v60" stroke="#c8c8c8"/></svg>
  </div>
  <div class="status"><i class="s1"></i><i class="s2"></i><i class="s3"></i><i class="s4"></i><i class="s5"></i>
    <svg width="295" height="39" viewBox="2265 1428 295 39" fill="#bcbcbc"><path d="M2283 1437h2v16h-2zM2294 1438v16l-8-8zM2324 1438v16l-8-8zM2348 1438v16l8-8zM2378 1438v16l8-8zM2388 1437h2v16h-2z"/><path d="M2407 1428h1.500v39h-1.500z" fill="#c8c8c8"/><path d="M2425 1437h6v6h-6zM2433 1437h6v6h-6zM2441 1437h6v6h-6zM2425 1445h6v6h-6zM2433 1445h6v6h-6zM2441 1445h6v6h-6zM2425 1453h6v6h-6zM2433 1453h6v6h-6zM2441 1453h6v6h-6zM2467 1437h22v14h-22zM2467 1453h6v6h-6zM2475 1453h6v6h-6zM2483 1453h6v6h-6z"/><path d="M2509 1437h22v22h-22z" fill="#666"/></svg>
  </div>
</main>

<footer class="desk">
  <div class="under"></div>
  <div class="dock">
    <svg width="115" height="133" viewBox="415 1467 115 133"><rect x="435" y="1492" width="82" height="76" rx="4" fill="url(#gfind)"/><path d="M477 1492h36q4 0 4 4v68q0 4-4 4h-29q-2-14-2-31h-13q0-28 8-45z" fill="url(#gface)"/><path d="M469 1537q0-28 8-45M469 1537h13q0 17 2 31" fill="none" stroke="#1b4a85" stroke-width="1.200"/><path d="M457 1513v6M494 1513v6" stroke="#13213a" stroke-width="3.500" stroke-linecap="round"/><path d="M451 1541q24 20 49 0" fill="none" stroke="#13213a" stroke-width="2.500" stroke-linecap="round"/><circle class="run" cx="476" cy="1592" r="4"/></svg>
    <svg width="110" height="133" viewBox="530 1467 110 133"><rect x="544" y="1490" width="81" height="80" rx="4" fill="#fff"/><path d="M544 1490h54l2 12-44 13-12 3z" fill="#84cfd9"/><path d="M544 1490h4l8 26-12 2zM544 1518l11-3 14 42-25 9z" fill="#4fb08c"/><path d="M598 1490h27v51l-11 4z" fill="#e4a32c"/><path d="M569 1559l56-18v29h-53z" fill="#d01c40"/><path d="M544 1566l25-8 4 12h-29z" fill="#1e0a20"/><text x="584" y="1545" class="slack">S</text><circle cx="617" cy="1499" r="18.500" fill="#f4403a"/><circle cx="617" cy="1501" r="3" fill="#fff"/><circle class="run" cx="584" cy="1592" r="4"/></svg>
    <svg width="46" height="133" viewBox="640 1467 46 133"><path d="M663 1502v64" stroke="#776562" stroke-width="2"/></svg>
    <svg width="108" height="133" viewBox="686 1467 108 133"><circle cx="740" cy="1530" r="46" fill="#ffcd4d"/><path d="M740 1530L700 1507a46 46 0 0 0 40 69l20-35z" fill="#279f5c"/><path d="M740 1530l-40-23a46 46 0 0 1 80 0z" fill="#d8493f"/><path d="M740 1509h41l-20 32zM719 1540l-19-34 23 12z" fill="#ffcd4d"/><path d="M740 1509h40q-10-20-40-25-26 2-40 22l20 34z" fill="#d8493f"/><circle cx="740" cy="1530" r="21" fill="#f5f5f5"/><circle cx="740" cy="1530" r="17" fill="#4c8bf5"/><circle class="run" cx="740" cy="1592" r="4"/></svg>
    <svg width="108" height="133" viewBox="794 1467 108 133"><rect x="806" y="1493" width="84" height="74" rx="4" fill="#050505" stroke="#b3b9c0" stroke-width="2"/><rect x="811" y="1498" width="74" height="63" fill="#262626"/><text x="815" y="1517" class="term">&gt;_</text><circle class="run" cx="848" cy="1592" r="4"/></svg>
    <svg width="108" height="133" viewBox="902 1467 108 133"><path d="M960 1495h40v70h-40z" fill="#fff"/><path d="M963 1507h28M963 1516h20M963 1526h28M963 1535h20M963 1544h28M963 1554h10" stroke="#333" stroke-width="3"/><path d="M983 1516h8M963 1526h10M983 1535h8M973 1554h18" stroke="#5577ae" stroke-width="3"/><path d="M912 1496l52-10v88l-52-10z" fill="#3463a8"/><text x="938" y="1544" class="office" textLength="31" lengthAdjust="spacingAndGlyphs">W</text><circle class="run" cx="956" cy="1592" r="4"/></svg>
    <svg width="108" height="133" viewBox="1010 1467 108 133"><circle cx="1064" cy="1530" r="44" fill="#eee"/><circle cx="1064" cy="1530" r="40.500" fill="url(#gsaf)"/><circle cx="1064" cy="1530" r="35.500" fill="none" stroke="#bfe3fa" stroke-width="5" stroke-dasharray="1 2.720"/><path d="M1092 1502l-34 23 10 10z" fill="#e8252b"/><path d="M1037 1557l21-32 11 10z" fill="#eee"/><path d="M1037 1557l32-22-5-5z" fill="#bbb"/><circle class="run" cx="1064" cy="1592" r="4"/></svg>
    <svg width="108" height="133" viewBox="1118 1467 108 133"><path d="M1133 1494l66-10 13 80-65 10z" fill="#323234"/><path d="M1192 1492l19 6 7 52-14 11z" fill="#2a8bd6"/><path d="M1149 1552l55-1v10z" fill="#1b80cb"/><path d="M1181 1506l-29 33M1148 1519l35 21M1181 1506l2 33" stroke="#2a86cc" stroke-width="6" fill="none"/><circle class="run" cx="1172" cy="1592" r="4"/></svg>
    <svg width="108" height="133" viewBox="1226 1467 108 133"><use href="#bubble" x="1236" y="1489" width="88" height="84"/><circle class="run" cx="1280" cy="1592" r="4"/></svg>
    <svg width="108" height="133" viewBox="1334 1467 108 133"><use href="#gear" x="1345" y="1489" width="86" height="82"/><circle cx="1421" cy="1499" r="18.500" fill="#f4403a"/><text x="1421" y="1507" class="badge">1</text><circle class="run" cx="1388" cy="1592" r="4"/></svg>
    <svg width="108" height="133" viewBox="1442 1467 108 133"><path d="M1500 1495h40v70h-40z" fill="#fff"/><path d="M1505 1508h27" stroke="#3c3c3c" stroke-width="8" stroke-dasharray="12 3"/><path d="M1505 1519h27M1505 1530h27M1505 1541h27M1505 1552h27" stroke="#5b9974" stroke-width="8" stroke-dasharray="12 3"/><path d="M1452 1496l52-10v88l-52-10z" fill="#2f8350"/><text x="1477" y="1546" class="office">X</text><circle class="run" cx="1496" cy="1592" r="4"/></svg>
    <svg width="108" height="133" viewBox="1550 1467 108 133"><use href="#tabcross" x="1561" y="1487" width="86" height="86"/><circle class="run" cx="1604" cy="1592" r="4"/></svg>
    <svg width="108" height="133" viewBox="1658 1467 108 133"><use href="#tabcross" x="1669" y="1487" width="86" height="86"/><circle class="run" cx="1712" cy="1592" r="4"/></svg>
    <svg width="44" height="133" viewBox="1766 1467 44 133"><path d="M1791 1486v96" stroke="#776562" stroke-width="2"/></svg>
    <svg width="110" height="133" viewBox="1810 1467 110 133"><rect x="1824" y="1483" width="88" height="94" fill="#3b3a38"/><rect x="1824" y="1483" width="88" height="12" fill="#474644"/><circle cx="1827" cy="1485" r="1.200" fill="#f55"/><circle cx="1830" cy="1485" r="1.200" fill="#fb4"/><path d="M1863 1485h10" stroke="#999"/><rect x="1827" y="1487" width="4" height="6" fill="#eee"/><circle cx="1838" cy="1490" r="3" fill="#2196f3"/><path d="M1858 1499h10M1830 1508h1.500M1833 1521h1.500M1833 1524h1.500M1858 1570h4" stroke="#2c7df0" stroke-width="2.500"/><path d="M1830 1570h28" stroke="#777" stroke-width="2.500"/><path d="M1868 1499h10M1895 1505h11" stroke="#aaa" stroke-width="2.500"/><path d="M1829 1504.500h33M1832 1508.500h15M1832 1512h22M1829 1517h27M1836 1521h15M1836 1524h24M1832 1559h13M1832 1562h48M1832 1565h20" stroke="#999" stroke-width="1"/><use href="#bubble" x="1881" y="1544" width="33" height="32"/></svg>
    <svg width="115" height="133" viewBox="1920 1467 115 133"><rect x="1929" y="1500" width="93" height="60" fill="#39373a"/><rect x="1929" y="1500" width="93" height="5" fill="#4b4a4a"/><circle cx="1932" cy="1502.500" r="1.200" fill="#f55"/><circle cx="1935" cy="1502.500" r="1.200" fill="#fb4"/><path d="M1941 1502.500h12M1972 1502.500h8M1999 1502.500h22" stroke="#999" stroke-width="2"/><rect x="1966" y="1511" width="53" height="41" fill="#222223"/><rect x="1940" y="1508" width="15" height="20" rx="7.500" fill="#1487fa"/><path d="M1943.500 1514.500l7 7-3 3v-13l3 3-7 7" stroke="#fff" fill="none"/><path d="M1942 1531h12M1938 1534.500h19M1940 1538.500h16M1939 1542h17" stroke="#aaa" stroke-width="1.500"/><path d="M1968 1512h3v4h-3zM1968 1518h3v4h-3z" fill="#ddd"/><path d="M1973 1513.500h20M1973 1519.500h7M1966 1556h22M1966 1509.500h7" stroke="#888"/><use href="#gear" x="1989" y="1544" width="33" height="31"/></svg>
    <svg width="110" height="133" viewBox="2035 1467 110 133"><path d="M2049 1494h70l-9 72q-2 9-26 9t-26-9z" fill="url(#gtrash)"/><ellipse cx="2084" cy="1495" rx="35" ry="8" fill="#24282b" stroke="#8a9094" stroke-width="1.500"/><path d="M2054 1497l4-11 12-4 5 3 5-2 8 6 8-7 8 6 9 4-4 8-15 3-10 2-12-1-9 1z" fill="#dcdcdc"/><path d="M2066 1488l10 8M2094 1486l8 10M2100 1498l8-5M2060 1494l6-6" stroke="#4a5058" stroke-width="3"/><path d="M2091 1492l6 8" stroke="#c5622d" stroke-width="3"/><path d="M2075 1496l9-5" stroke="#4ac" stroke-width="3"/><path d="M2065 1514l5 50M2083 1516l1 52M2102 1512l-6 52" stroke="#848d92" stroke-width="3" opacity=".4"/></svg>
  </div>
  <svg class="mini" width="415" height="133" viewBox="2145 1467 415 133"><path d="M2145 1467h117q-2 5-8 5h-109z" fill="#909693"/><rect x="2289" y="1497" width="118" height="77" fill="#fafafa"/><rect x="2294" y="1502" width="108" height="67" fill="#d9dbda"/><path d="M2294 1503h108" stroke="#486489" stroke-width="2"/><path d="M2294 1506h108" stroke="#4c8f6c" stroke-width="4"/><path d="M2300 1512h90" stroke="#bbb" stroke-width="2"/><path d="M2301 1519v41M2308 1519v41M2315 1519v41M2322 1521v37M2344 1521v37M2352 1519v40" stroke="#999" stroke-width="4" stroke-dasharray="1 1"/><path d="M2336 1519v40" stroke="#1fe02a" stroke-width="6"/><path d="M2336 1521v3M2336 1529v2M2336 1534v2M2336 1545v2" stroke="#e02020" stroke-width="6"/><path d="M2366 1520h9M2377 1520h9M2366 1523h9M2377 1523h7" stroke="#8d8d8d" stroke-dasharray="3 1"/><path d="M2294 1566h108" stroke="#050505" stroke-width="6"/></svg>
</footer>
</body>
</html>
```
FILE: styles.css
```css
* { box-sizing: border-box; }
body { margin: 0; width: 2560px; height: 1600px; overflow: hidden; display: flex; flex-direction: column; background: #1d1412; font-family: Roboto, sans-serif; font-size: 25px; color: #333; line-height: 1; white-space: nowrap; }
.defs { position: absolute; }
svg { display: block; flex: none; }
p, h1, h2, ul { margin: 0; padding: 0; font-weight: normal; list-style: none; }

.menubar { height: 46px; display: flex; align-items: center; color: #fff; font: 27.5px Inter, sans-serif; background: linear-gradient(90deg, #513f41, #46414a 33%, #4d4045 47%, #403e49 58%, #343a4a 68%, #283549); border-bottom: 2px solid #3a3a44; }
.menus { display: flex; }
.menus span { letter-spacing: -.15px; }
.menus .m1 { width: 237px; font-weight: 700; letter-spacing: .25px; }
.m2 { width: 83px; } .m3 { width: 98px; } .m4 { width: 175px; } .m5 { width: 179px; } .m6 { width: 105px; } .m7 { width: 129px; } .m8 { width: 139px; }
.tray { display: flex; align-items: center; margin-left: auto; }
.pct { width: 45px; font-size: 23px; letter-spacing: -.6px; }
.clock { width: 192px; letter-spacing: -.2px; }

.window { height: 1421px; display: flex; flex-direction: column; overflow: hidden; border-radius: 10px; background: #f5f5f5; }
.titlebar { height: 44px; display: flex; align-items: center; padding-left: 16px; gap: 16px; background: linear-gradient(#e8e8e8, #cecece); border-bottom: 2px solid #adadad; border-top: 1px solid #f5f5f5; }
.light { width: 24px; height: 24px; border-radius: 50%; }
.red { background: #fc605c; border: 1px solid #e0443e; }
.amber { background: #fdbc40; border: 1px solid #dfa023; }
.green { background: #34c84a; border: 1px solid #24a732; }
.wtitle { flex: 1; padding: 2px 138px 0 0; text-align: center; font: 25.500px Inter, sans-serif; color: #4a4a4a; }

.toolbar { height: 80px; display: flex; align-items: center; background: #f5f5f5; }
.sep { width: 2px; height: 70px; background: #d4d4d4; flex: none; }
.combo { width: 196px; height: 46px; margin-right: 30px; border: 2px solid #d0d0d0; border-radius: 2px; display: flex; align-items: center; justify-content: flex-end; padding-right: 10px; }
.showme { margin-left: auto; width: 200px; display: flex; align-items: center; color: #8f8f8f; letter-spacing: -.3px; }

.work { height: 1196px; display: flex; }
.side { width: 420px; background: #fafafa; border-right: 2px solid #d0d0d0; border-top: 2px solid #d0d0d0; display: flex; flex-direction: column; }
.sidetabs { display: flex; height: 56px; color: #000; }
.tab-on { width: 186px; padding: 13px 0 0 36px; }
.tab-off { flex: 1; display: flex; justify-content: space-between; align-items: flex-start; padding: 13px 14px 0 24px; border-left: 2px solid #d0d0d0; border-bottom: 2px solid #d0d0d0; }
.tab-off svg { margin-top: 4px; }
.newpoint { height: 165px; padding: 40px 0 0 36px; border-bottom: 2px solid #ccc; }
.newpoint p { letter-spacing: -.1px; }
.btns { display: flex; gap: 24px; margin-top: 27px; }
.btn { height: 46px; border: 2px solid #ccc; border-radius: 2px; background: #fff; display: flex; align-items: center; justify-content: center; padding-bottom: 3px; }
.blank { width: 162px; } .dup { width: 160px; }
.sheets { height: 536px; padding-top: 38px; border-bottom: 2px solid #ccc; }
.row { height: 40px; display: flex; align-items: center; padding-left: 39px; position: relative; letter-spacing: .08px; }
.row.on { background: #f4f4f4; }
.row.wide, .t.wide { letter-spacing: .28px; }
.si { width: 26px; height: 26px; margin-right: 21px; }
.tick { position: absolute; left: 54px; top: 22px; }
.pop { margin-left: auto; margin-right: 7px; margin-top: -6px; }
.drag { height: 145px; padding: 33px 0 0 37px; border-bottom: 2px solid #ccc; display: flex; align-items: flex-start; line-height: 31px; letter-spacing: -.1px; }
.show { height: 95px; padding: 33px 0 0 36px; border-bottom: 2px solid #ccc; display: flex; line-height: 31px; letter-spacing: -.1px; }
.size { padding: 43px 0 0 36px; }
.pick { width: 346px; height: 48px; margin-top: 26px; display: flex; align-items: center; justify-content: space-between; border-bottom: 2px solid #555; padding-left: 2px; letter-spacing: .3px; }

.page { width: 1600px; background: #fff; font-family: "Noto Sans", sans-serif; font-size: 24px; display: flex; flex-direction: column; height: 1194px; }
h1 { font-size: 48px; color: #333; line-height: 60px; padding: 14px 0 0 21px; height: 98px; letter-spacing: .5px; }
.storypoint { position: relative; width: 300px; height: 140px; margin-left: 650px; background: #dadada; color: #000; padding: 27px 25px; line-height: 30px; letter-spacing: .15px; }
.callout { position: absolute; left: -5px; top: -105px; filter: drop-shadow(4px 6px 4px rgba(0,0,0,.22)); }
.viz { display: flex; padding: 63px 0 0 32px; }
.vizmain { width: 1216px; }
.field { position: relative; height: 33px; padding-left: 12px; line-height: 32px; font-weight: 600; font-size: 23px; letter-spacing: .15px; }
.plus { position: absolute; left: 80px; top: 6px; }
.pane { display: flex; height: 827px; background: #f5f5f5; border-top: 1px solid #e2e2e2; border-bottom: 2px solid #e2e2e2; border-right: 2px solid #e2e2e2; }
.year { width: 160px; border-right: 1px solid #e2e2e2; padding-left: 12px; display: flex; align-items: center; color: #000; letter-spacing: .5px; }
.mapbox { width: 1054px; height: 824px; position: relative; }
.osm { position: absolute; left: 6px; top: 796px; height: 24px; padding: 0 6px; background: rgba(252,252,252,.85); color: #777; font: bold 14.900px/23px "Liberation Sans", sans-serif; }
.river path { fill: none; stroke: #fff; vector-effect: non-scaling-stroke; stroke-linecap: round; stroke-linejoin: round; }
.river .w3 { stroke-width: 3.500px; } .river .w4 { stroke-width: 5px; } .river .w5 { stroke-width: 6px; } .river .w6 { stroke-width: 7.500px; } .river .w9 { stroke-width: 11px; }
.border { fill: none; stroke: #7c7c7c; stroke-width: 2.400px; stroke-dasharray: 6 2; vector-effect: non-scaling-stroke; }
.dots circle { stroke: #f2f2f2; stroke-opacity: .75; stroke-width: 3px; }

.legend { padding-left: 8px; margin-top: -1px; color: #333; }
h2 { font-size: 23.500px; font-weight: 600; line-height: 37px; height: 37px; letter-spacing: -.1px; }
.legend li { height: 40px; display: flex; align-items: center; line-height: 34px; padding-left: 6px; }
.legend li i { width: 28px; height: 28px; margin-right: 10px; }
.legend ul { padding-top: 2px; }
.legend .count { height: 47px; line-height: 57px; }
.c1 { background: #4e79a7; } .c2 { background: #a0cbe8; } .c3 { background: #f28e2b; } .c4 { background: #ffbe7d; } .c5 { background: #59a14f; } .c6 { background: #8cd17d; } .c7 { background: #b6992d; } .c8 { background: #f1ce63; } .c9 { background: #499894; } .c10 { background: #86bcb6; } .c11 { background: #e15759; } .c12 { background: #ff9d9a; } .c13 { background: #79706e; } .c14 { background: #bab0ac; } .c15 { background: #d37295; }
.pager, .play, .history { display: flex; margin-left: 12px; width: 280px; }
.pager { gap: 4px; height: 37px; margin-top: 1px; }
.box { width: 32px; border: 2px solid #c8c8c8; border-radius: 2px; display: flex; align-items: center; justify-content: center; background: #fff; }
.value { width: 208px; border: 2px solid #c8c8c8; border-radius: 2px; display: flex; align-items: center; justify-content: space-between; padding: 0 10px 0 7px; font-size: 21px; background: linear-gradient(90deg, transparent 169px, #e0e0e0 169px, #e0e0e0 171px, transparent 171px); }
em { font-style: normal; }
.slider { margin: 18px 0 0 10px; }
.play { height: 32px; gap: 2px; margin-top: 14px; }
.sel { background: #d3d3d3; border-color: #666; }
.speed { margin-left: auto; }
.history { margin-top: 8px; align-items: center; color: #a6a6a6; font-size: 19.500px; }
.history i { width: 30px; height: 30px; border: 2px solid #ccc; margin-right: 10px; }

.gutter { width: 508px; }
.scroll { width: 32px; background: #fafafa; border-left: 2px solid #e6e6e6; padding: 8px 0 2px 7px; }
.scroll i { display: block; width: 17px; height: 1186px; border-radius: 9px; background: #c2c2c2; }

.tabs { height: 62px; display: flex; background: linear-gradient(#e7e7e7, #e3e3e3); border-top: 2px solid #ccc; border-bottom: 2px solid #ccc; color: #505050; }
.t { display: flex; align-items: center; border-right: 2px solid #c8c8c8; flex: none; padding-left: 12px; }
.t0 { width: 262px; padding-left: 0; letter-spacing: -.1px; } .t1 { width: 269px; } .t2 { width: 254px; padding-left: 11px; } .t3 { width: 112px; padding-left: 11px; } .t4 { width: 96px; padding-left: 11px; } .t5 { width: 112px; } .t6 { width: 286px; padding-left: 11px; } .t7 { width: 144px; } .t8 { width: 138px; } .t9 { width: 145px; background: #fafafa; letter-spacing: .2px; }
.t7, .t8, .t9 { padding-left: 15px; }
.bk { width: 24px; height: 24px; margin-right: 8px; }
.status { height: 39px; display: flex; background: #ebebeb; }
.status i { border-right: 2px solid #c8c8c8; }
.s1 { width: 1810px; } .s2 { width: 253px; } .s3 { width: 54px; } .s4 { width: 54px; } .s5 { width: 94px; }

.desk { height: 133px; display: flex; position: relative; background: linear-gradient(rgba(10,6,6,.55), transparent 60%), linear-gradient(90deg, #2c1c17, #2a1b17 16%, #231614 80%, #241615); }
.under { width: 415px; height: 5px; background: linear-gradient(90deg, transparent 170px, #1d1b1e 170px, #1d1b1e 300px, #3b3238 300px); }
.dock { width: 1730px; display: flex; background: linear-gradient(#2f2222, #35201f); border-radius: 8px 8px 0 0; box-shadow: inset 0 2px #4d4745, inset 2px 0 #4a403e, inset -2px 0 #4a403e, 0 0 50px rgba(0,0,0,.16); }
.run { fill: #b5a3a1; }
.slack { font: 900 46px Lato, sans-serif; text-anchor: middle; fill: #1b1f28; }
.term { font: bold 18px "Liberation Mono", monospace; fill: #fff; }
.office { font: bold 40px "Open Sans", sans-serif; text-anchor: middle; fill: #fff; }
.badge { font: 22px Inter, sans-serif; text-anchor: middle; fill: #fff; }
```
